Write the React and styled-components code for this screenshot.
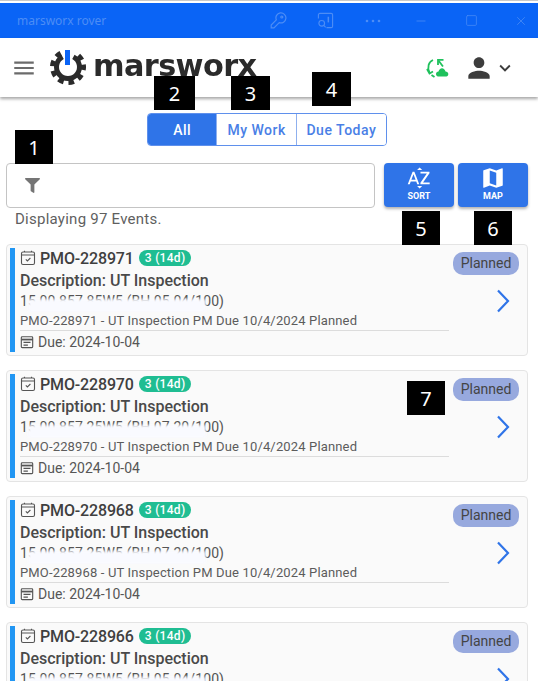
import React from 'react';
import styled, { createGlobalStyle } from 'styled-components';
import { MdMenu, MdPerson, MdExpandMore, MdSortByAlpha, MdMap } from 'react-icons/md';
import { FaFilter } from 'react-icons/fa';
import { Minus, Square, X } from 'lucide-react';

const GlobalStyle = createGlobalStyle`
    html, body {
        margin: 0;
        padding: 0;
        width: 538px;
        height: 681px;
        overflow: hidden;
        background: white;
        font-family: Roboto, "Liberation Sans", sans-serif;
    }
    * { box-sizing: border-box; }
`;

const Page = styled.div`
    position: relative;
    width: 538px;
    height: 681px;
    overflow: hidden;
    padding-top: 2px;
    background: white;
    border-top: 1px solid #c9c9c9;
`;

const TitleBar = styled.div`
    width: 546px;
    height: 35px;
    background: #0a64f6;
    display: flex;
    align-items: center;
    padding-left: 17px;
    color: #4d8df5;
    font-family: "Noto Sans", sans-serif;
    font-size: 12px;
    span { flex: 1; }
`;

const WinIcon = styled.div`
    width: ${p => p.$w}px;
    display: flex;
    justify-content: center;
    align-items: center;
`;

const Header = styled.div`
    height: 59px;
    display: flex;
    align-items: center;
    background: white;
    box-shadow: 0 2px 3px rgba(0,0,0,.35);
    padding-left: 11px;
    padding-right: 22px;
    position: relative;
    color: #6b6b6b;
`;

const Logo = styled.div`
    display: flex;
    align-items: center;
    margin-left: 13px;
    flex: 1;
`;

const LogoText = styled.span`
    font-family: "DejaVu Sans", sans-serif;
    font-weight: 700;
    font-size: 30px;
    letter-spacing: -0.6px;
    color: #2b2b2b;
    margin-left: 7px;
    margin-top: -4px;
    transform: scaleX(1.01);
    transform-origin: left;
`;

const Toggle = styled.div`
    margin: 16px 0 0 147px;
    width: 240px;
    height: 33px;
    display: flex;
    border: 1px solid #5f90ec;
    border-radius: 4px;
    overflow: hidden;
`;

const ToggleBtn = styled.div`
    width: ${p => p.$w}px;
    display: flex;
    align-items: center;
    justify-content: center;
    font-size: 14px;
    font-weight: 500;
    letter-spacing: .5px;
    color: ${p => p.$active ? 'white' : '#4a7fe6'};
    background: ${p => p.$active ? '#2f74e8' : 'white'};
    & + & { border-left: 1px solid #8fb0ee; }
`;

const SearchRow = styled.div`
    display: flex;
    margin-top: 17px;
    padding-left: 6px;
`;

const SearchBox = styled.div`
    width: 369px;
    height: 45px;
    border: 1px solid #c4c4c4;
    border-radius: 4px;
    display: flex;
    align-items: center;
    padding-left: 18px;
    color: #757575;
`;

const ActionBtn = styled.div`
    width: 70px;
    height: 44px;
    margin-left: ${p => p.$ml}px;
    background: #2f74e8;
    border-radius: 4px;
    color: white;
    display: flex;
    flex-direction: column;
    align-items: center;
    box-shadow: 0 2px 3px rgba(0,0,0,.3);
    font-size: 9px;
    font-weight: 700;
    padding-top: 2px;
    line-height: 11px;
`;

const Count = styled.div`
    margin: 3px 0 0 15px;
    font-size: 15px;
    color: #5f5f5f;
    letter-spacing: .25px;
    height: 17px;
    line-height: 17px;
`;

const List = styled.div`
    margin-top: 16px;
    padding: 0 10px 0 6px;
    display: flex;
    flex-direction: column;
    gap: 14px;
`;

const Card = styled.div`
    position: relative;
    flex: none;
    height: 112px;
    background: #fafafa;
    border: 1px solid #e4e4e4;
    border-radius: 4px;
    padding-left: 3px;
    display: flex;
`;

const Strip = styled.div`
    width: 5px;
    margin: 3px 0;
    background: #2196f3;
    flex: none;
`;

const Body = styled.div`
    width: 434px;
    padding-left: 5px;
    color: #4f4f4f;
`;

const TopLine = styled.div`
    display: flex;
    align-items: center;
    height: 26px;
`;

const EventId = styled.span`
    font-size: 16px;
    font-weight: 500;
    color: #3f3f3f;
    margin-left: 4px;
    letter-spacing: -.15px;
`;

const Age = styled.span`
    margin: -1px 0 0 5px;
    background: #1fbd92;
    color: white;
    height: 16px;
    line-height: 16px;
    border-radius: 8px;
    padding: 0 6px;
    font-size: 12px;
    font-weight: 500;
    letter-spacing: .3px;
`;

const Desc = styled.div`
    font-size: 16px;
    font-weight: 500;
    color: #494949;
    height: 20px;
    line-height: 20px;
`;

const Asset = styled.div`
    position: relative;
    font-size: 14px;
    color: #555;
    height: 21px;
    line-height: 21px;
    width: 220px;
    overflow: hidden;
    white-space: nowrap;
    letter-spacing: .1px;
`;

const Redact = styled.div`
    position: absolute;
    left: 8px;
    top: 8px;
    width: 178px;
    height: 13px;
    background: #f9faff;
    filter: blur(1.5px);
`;

const Summary = styled.div`
    font-size: 13px;
    color: #5c5c5c;
    height: 19px;
    line-height: 18px;
    letter-spacing: .15px;
    border-bottom: 1px solid #dcdcdc;
`;

const Due = styled.div`
    display: flex;
    align-items: center;
    gap: 4px;
    font-size: 14px;
    color: #565656;
    height: 22px;
`;

const Side = styled.div`
    flex: 1;
    display: flex;
    flex-direction: column;
    align-items: flex-end;
    padding: 7px 8px 0 0;
`;

const Status = styled.div`
    background: #97a9de;
    color: #444;
    height: 23px;
    line-height: 23px;
    width: 66px;
    text-align: center;
    border-radius: 10px;
    font-size: 14px;
`;

const Arrow = styled.svg`
    margin: 14px 9px 0 0;
    flex: none;
`;

const Marker = styled.div`
    position: absolute;
    left: ${p => p.$x}px;
    top: ${p => p.$y}px;
    width: ${p => p.$w || 38}px;
    height: 34px;
    background: #000;
    color: white;
    font-family: "Noto Sans", sans-serif;
    font-size: 20px;
    display: flex;
    align-items: center;
    justify-content: center;
    z-index: 5;
`;

const CalCheck = () => (
    <svg width="16" height="16" viewBox="0 0 16 16" fill="none" stroke="#555" strokeWidth="1.1">
        <rect x="1.5" y="2" width="13" height="12.5" rx="1.5" />
        <path d="M1.5 5h13M4.5 .8v1.2M11.5 .8v1.2" />
        <path d="M5.8 9.3l1.6 1.7 3-3" />
    </svg>
);

const CalDue = () => (
    <svg width="14" height="14" viewBox="0 0 16 16" fill="none" stroke="#555" strokeWidth="1.3">
        <rect x="1.5" y="2" width="13" height="12.5" rx="1" />
        <path d="M1.5 5.2h13" strokeWidth="2" />
        <path d="M4 8.5h8M4 11.5h5" />
    </svg>
);

const GearLogo = () => (
    <svg width="36" height="36" viewBox="0 0 36 36">
        <path d="M10.700 3.300A15.500 15.500 0 1 0 25.300 3.300" fill="none" stroke="#2b2b2b" strokeWidth="5" strokeDasharray="5.500 4.800" />
        <path d="M12.600 6.850A11.500 11.500 0 1 0 23.400 6.850" fill="none" stroke="#2b2b2b" strokeWidth="5" />
        <rect x="15" y="0" width="5" height="15" fill="#0a64f6" />
    </svg>
);

const SyncCloud = () => (
    <svg width="24" height="22" viewBox="0 0 24 22" fill="none" stroke="#1fc15c" strokeWidth="1.800">
        <path d="M8 3C3.500 5 2 10 4.500 15.500" />
        <path d="M2 12l2.500 4.500 3.500-2" />
        <path d="M9.500 20l-3-2" />
        <path d="M18 9.500L13.500 3.500" />
        <path d="M13 8V2.800H18.500" />
        <path d="M11 17c0-1.500 1.100-2.500 2.500-2.500 .4-2 2-3.300 3.500-3.300s3.100 1.300 3.500 3.300c1.500 0 2.800 1 2.800 2.500S22.500 19.500 21.300 19.500H13C12 19.500 11 18.500 11 17z" fill="#1fc15c" stroke="none" />
    </svg>
);

const KeyIcon = () => (
    <svg width="17" height="17" viewBox="0 0 17 17" fill="none" stroke="#4d8df5" strokeWidth="1.2">
        <path d="M6.300 7.800L1.200 13v2.800H4l5.200-5.200A5 5 0 1 0 6.300 7.800z" />
        <circle cx="11.800" cy="5" r="1" />
    </svg>
);

const CastInfo = () => (
    <svg width="17" height="17" viewBox="0 0 18 18" fill="none" stroke="#4d8df5" strokeWidth="1.2">
        <path d="M1.500 7V3a1.500 1.500 0 0 1 1.500-1.500h12A1.500 1.500 0 0 1 16.500 3v12a1.500 1.500 0 0 1-1.500 1.500H10" />
        <path d="M12 5v6" strokeWidth="1.600" />
        <circle cx="5" cy="12" r="3" />
        <path d="M7.200 14.200l2 2" />
    </svg>
);

const events = [
    { id: 'PMO-228971', asset: '15 00 857 85W5 (BH 05 04/100)' },
    { id: 'PMO-228970', asset: '15 00 857 25W5 (BH 07 20/100)' },
    { id: 'PMO-228968', asset: '15 00 857 25W5 (BH 07 20/100)' },
    { id: 'PMO-228966', asset: '15 00 857 85W5 (BH 05 04/100)' },
];

const App = () => {
    return (
        <Page>
            <GlobalStyle />
            <TitleBar>
                <span>marsworx rover</span>
                <WinIcon $w={47}><KeyIcon /></WinIcon>
                <WinIcon $w={47}><CastInfo /></WinIcon>
                <WinIcon $w={47}><svg width="16" height="4" viewBox="0 0 16 4" fill="#4d8df5"><circle cx="2" cy="2" r="1.300" /><circle cx="8" cy="2" r="1.300" /><circle cx="14" cy="2" r="1.300" /></svg></WinIcon>
                <WinIcon $w={50}><Minus size={14} color="#4d8df5" strokeWidth={1.3} /></WinIcon>
                <WinIcon $w={50}><Square size={13} color="#4d8df5" strokeWidth={1.3} /></WinIcon>
                <WinIcon $w={50}><X size={14} color="#4d8df5" strokeWidth={1.3} /></WinIcon>
            </TitleBar>
            <Header>
                <MdMenu size={26} />
                <Logo>
                    <GearLogo />
                    <LogoText>marsworx</LogoText>
                </Logo>
                <SyncCloud />
                <MdPerson size={32} color="#3d3d3d" style={{ marginLeft: 14 }} />
                <MdExpandMore size={22} color="#3d3d3d" style={{ marginLeft: -1 }} />
            </Header>
            <Toggle>
                <ToggleBtn $w={69} $active>All</ToggleBtn>
                <ToggleBtn $w={80}>My Work</ToggleBtn>
                <ToggleBtn $w={91}>Due Today</ToggleBtn>
            </Toggle>
            <SearchRow>
                <SearchBox><FaFilter size={15} /></SearchBox>
                <ActionBtn $ml={9}><MdSortByAlpha size={26} />SORT</ActionBtn>
                <ActionBtn $ml={4}><MdMap size={26} />MAP</ActionBtn>
            </SearchRow>
            <Count>Displaying 97 Events.</Count>
            <List>
                {events.map(ev => (
                    <Card key={ev.id}>
                        <Strip />
                        <Body>
                            <TopLine>
                                <CalCheck />
                                <EventId>{ev.id}</EventId>
                                <Age>3 (14d)</Age>
                            </TopLine>
                            <Desc>Description: UT Inspection</Desc>
                            <Asset>
                                {ev.asset}
                                <Redact />
                            </Asset>
                            <Summary>{ev.id} - UT Inspection PM Due 10/4/2024 Planned</Summary>
                            <Due><CalDue />Due: 2024-10-04</Due>
                        </Body>
                        <Side>
                            <Status>Planned</Status>
                            <Arrow width="14" height="24" viewBox="0 0 14 24" fill="none" stroke="#2f74e8" strokeWidth="2.200">
                                <path d="M2 1.500L12 12 2 22.500" />
                            </Arrow>
                        </Side>
                    </Card>
                ))}
            </List>
            <Marker $x={15} $y={129}>1</Marker>
            <Marker $x={154} $y={75} $w={41}>2</Marker>
            <Marker $x={231} $y={75} $w={39}>3</Marker>
            <Marker $x={312} $y={71} $w={39}>4</Marker>
            <Marker $x={402} $y={210}>5</Marker>
            <Marker $x={474} $y={210}>6</Marker>
            <Marker $x={407} $y={380}>7</Marker>
        </Page>
    );
};

export default App;
